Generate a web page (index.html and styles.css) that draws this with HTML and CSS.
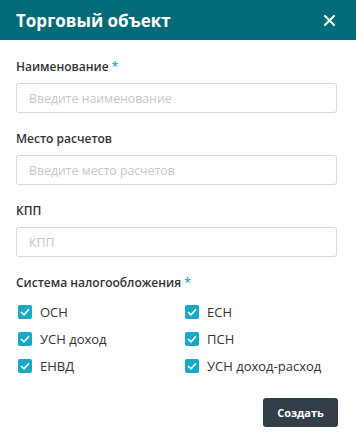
FILE: index.html
```html
<!DOCTYPE html>
<html lang="ru">
<head>
<meta charset="utf-8">
<title>Торговый объект</title>
<link rel="stylesheet" href="styles.css">
</head>
<body>
<div class="modal">
  <header class="modal-header">
    <h1 class="modal-title">Торговый объект</h1>
    <button class="close" aria-label="Закрыть">
      <svg width="11" height="11" viewBox="0 0 11 11"><path d="M1 1L10 10M10 1L1 10" stroke="#fff" stroke-width="2" stroke-linecap="round"/></svg>
    </button>
  </header>
  <form class="modal-body">
    <div class="field">
      <label class="label">Наименование <span class="req">*</span></label>
      <input class="input" type="text" placeholder="Введите наименование">
    </div>
    <div class="field">
      <label class="label">Место расчетов</label>
      <input class="input" type="text" placeholder="Введите место расчетов">
    </div>
    <div class="field">
      <label class="label">КПП</label>
      <input class="input" type="text" placeholder="КПП">
    </div>
    <div class="field field-last">
      <label class="label">Система налогообложения <span class="req">*</span></label>
      <div class="checks">
        <label class="check"><span class="box"><svg width="10" height="8" viewBox="0 0 10 8"><path d="M1 4L4 6.8L9 1.2" fill="none" stroke="#fff" stroke-width="1.6"/></svg></span>ОСН</label>
        <label class="check"><span class="box"><svg width="10" height="8" viewBox="0 0 10 8"><path d="M1 4L4 6.8L9 1.2" fill="none" stroke="#fff" stroke-width="1.6"/></svg></span>ЕСН</label>
        <label class="check"><span class="box"><svg width="10" height="8" viewBox="0 0 10 8"><path d="M1 4L4 6.8L9 1.2" fill="none" stroke="#fff" stroke-width="1.6"/></svg></span>УСН доход</label>
        <label class="check"><span class="box"><svg width="10" height="8" viewBox="0 0 10 8"><path d="M1 4L4 6.8L9 1.2" fill="none" stroke="#fff" stroke-width="1.6"/></svg></span>ПСН</label>
        <label class="check"><span class="box"><svg width="10" height="8" viewBox="0 0 10 8"><path d="M1 4L4 6.8L9 1.2" fill="none" stroke="#fff" stroke-width="1.6"/></svg></span>ЕНВД</label>
        <label class="check"><span class="box"><svg width="10" height="8" viewBox="0 0 10 8"><path d="M1 4L4 6.8L9 1.2" fill="none" stroke="#fff" stroke-width="1.6"/></svg></span>УСН доход-расход</label>
      </div>
    </div>
    <div class="actions">
      <button type="button" class="btn">Создать</button>
    </div>
  </form>
</div>
</body>
</html>
```
FILE: styles.css
```css
* { box-sizing: border-box; }
html, body { margin: 0; padding: 0; background: #fff; }
body { font-family: "Open Sans", "Noto Sans", sans-serif; color: #333; }
.modal { width: 356px; }
.modal-header {
  height: 40px;
  background: #046c78;
  display: flex;
  align-items: center;
  justify-content: space-between;
  padding: 0 21px 0 16px;
}
.modal-title {
  margin: 0;
  font-size: 17px;
  font-weight: 700;
  color: #fff;
}
.close {
  border: 0; background: none; padding: 0; width: 11px; height: 11px;
  display: flex;
}
.modal-body { padding: 19px 19px 0 16px; margin: 0; }
.field { margin-bottom: 18px; }
.field-last { margin-bottom: 0; }
.label {
  display: block;
  font-size: 12px;
  font-weight: 600;
  line-height: 16px;
  color: #333;
  margin-bottom: 8px;
}
.req { color: #18aac6; }
.input {
  display: block;
  width: 100%;
  height: 30px;
  border: 1px solid #dadada;
  border-radius: 3px;
  padding: 0 12px;
  font-family: inherit;
  font-size: 12.3px;
  color: #333;
  outline: none;
}
.input::placeholder { color: #c6c6c6; }
.checks {
  display: grid;
  grid-template-columns: 167px 1fr;
  grid-auto-rows: 27px;
  padding-left: 2px;
  margin-top: -1px;
}
.check {
  display: flex;
  align-items: center;
  gap: 8px;
  font-size: 13px;
  color: #333;
}
.box {
  width: 14px; height: 14px;
  border-radius: 2px;
  background: #17a9c5;
  display: flex; align-items: center; justify-content: center;
}
.actions { display: flex; justify-content: flex-end; margin-top: 19px; margin-right: -1px; }
.btn {
  width: 75px; height: 29px;
  border: 0; border-radius: 3px;
  background: #333e48;
  color: #fff;
  font-family: inherit;
  font-size: 11px;
  font-weight: 700;
}
```
